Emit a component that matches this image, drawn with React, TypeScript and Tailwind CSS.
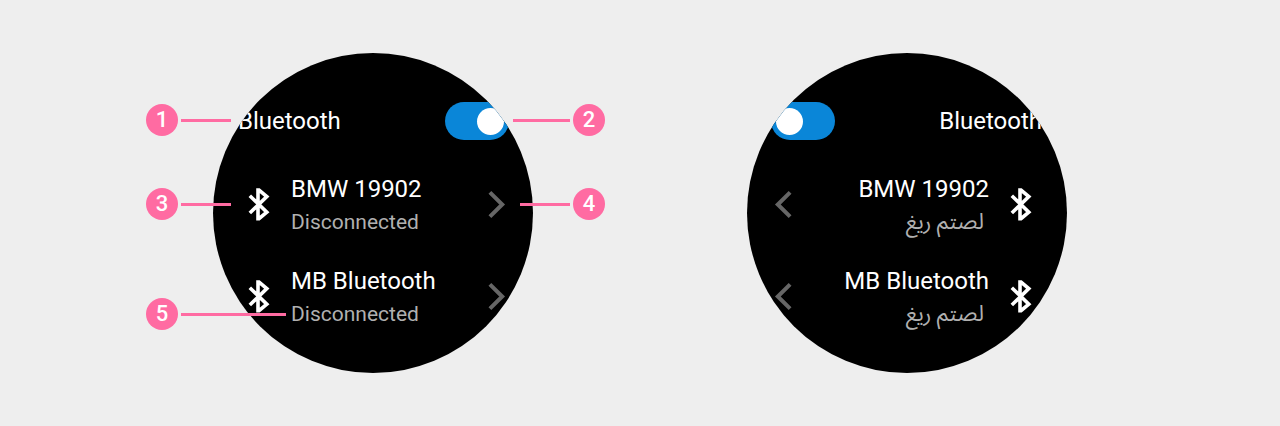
import { useState } from "react";

type Dir = "ltr" | "rtl";

const devices = ["BMW 19902", "MB Bluetooth"];

function BluetoothIcon() {
  return (
    <svg
      viewBox="0 0 40 40"
      className="size-10 shrink-0"
      fill="none"
      stroke="currentColor"
      strokeWidth="3.6"
      aria-hidden="true"
    >
      <path d="M10.8 11.7 27.8 28.1 20 34.6H19V6.1H20L27.8 12.6 10.8 29" />
    </svg>
  );
}

function Chevron() {
  return (
    <svg
      viewBox="0 0 40 40"
      className="size-10 shrink-0 rtl:-scale-x-100"
      fill="none"
      stroke="currentColor"
      strokeWidth="4"
      aria-hidden="true"
    >
      <path d="M12.9 8.3 25.2 20.5 12.9 32.7" />
    </svg>
  );
}

function Toggle({ id }: { id: string }) {
  const [on, setOn] = useState(true);
  return (
    <span className="flex h-[38px] w-16 shrink-0">
      <input
        id={id}
        type="checkbox"
        role="switch"
        checked={on}
        onChange={() => setOn(!on)}
        className="flex h-full w-full cursor-pointer appearance-none items-center rounded-full bg-[#666] px-[5px] before:size-[27px] before:rounded-full before:bg-white checked:justify-end checked:bg-[#0a86d8]"
      />
    </span>
  );
}

function Watch({ dir, status }: { dir: Dir; status: string }) {
  const id = `bluetooth-${dir}`;
  return (
    <section
      dir={dir}
      className="flex size-80 flex-col overflow-hidden rounded-full bg-black pt-[49px] text-2xl text-white"
    >
      <div className="flex items-center justify-between ps-[25px] pe-6">
        <label htmlFor={id}>Bluetooth</label>
        <Toggle id={id} />
      </div>
      <ul className="mt-[18px]">
        {devices.map((name) => (
          <li key={name}>
            <button
              type="button"
              className="flex h-[92px] w-full items-center ps-[26px] pe-4 text-start"
            >
              <BluetoothIcon />
              <span className="ms-3 flex grow flex-col pt-1">
                <span className="leading-8">{name}</span>
                <span className="text-[21px] leading-[34px] text-[#b0b0b0] rtl:ps-[5px] rtl:text-[22px]">
                  {status}
                </span>
              </span>
              <span className="flex text-[#666]">
                <Chevron />
              </span>
            </button>
          </li>
        ))}
      </ul>
    </section>
  );
}

function Callout({ n, place, line }: { n: number; place: string; line: string }) {
  return (
    <div className={`absolute flex items-center gap-[3px] ${place}`}>
      <span className="flex size-8 items-center justify-center rounded-full bg-[#ff6ba2] text-[22px] leading-8 font-medium text-white">
        {n}
      </span>
      <span className={`h-[3px] bg-[#ff6ba2] ${line}`} />
    </div>
  );
}

export default function App() {
  return (
    <main className="flex min-h-screen flex-wrap items-center justify-center gap-x-[214px] gap-y-16 bg-[#eee] py-[53px] font-['Roboto','Noto_Sans_Arabic','Noto_Sans',sans-serif]">
      <div className="relative">
        <Watch dir="ltr" status="Disconnected" />
        <Callout n={1} place="top-[51px] -left-[67px]" line="w-[50px]" />
        <Callout n={2} place="top-[51px] -right-[72px] flex-row-reverse" line="w-[57px]" />
        <Callout n={3} place="top-[135px] -left-[67px]" line="w-[50px]" />
        <Callout n={4} place="top-[135px] -right-[72px] flex-row-reverse" line="w-[50px]" />
        <Callout n={5} place="top-[245px] -left-[67px]" line="w-[105px]" />
      </div>
      <Watch dir="rtl" status="لصتم ريغ" />
    </main>
  );
}
